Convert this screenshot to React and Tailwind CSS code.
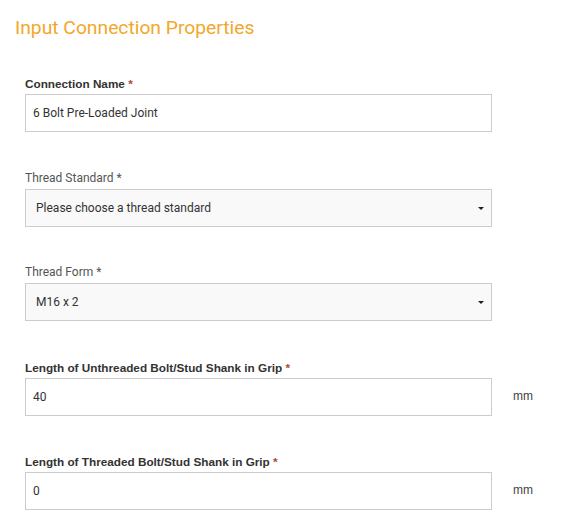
import { useState } from "react";

const font = { fontFamily: "Roboto, 'Liberation Sans', sans-serif" };
const arial = { fontFamily: "'Liberation Sans', Arial, sans-serif" };

function Caret() {
  return (
    <svg width="6" height="3" viewBox="0 0 6 3" className="shrink-0">
      <path d="M0 0 H6 L3 3 Z" fill="#222" />
    </svg>
  );
}

function Label({ text, bold }) {
  return (
    <div
      className={[
        "mb-[2px] leading-[17px]",
        bold ? "text-[11.75px] font-bold text-[#333]" : "text-[12px] text-[#555]",
      ].join(" ")}
      style={bold ? arial : undefined}
    >
      {text}{" "}
      <span className={bold ? "text-[#a94442]" : ""}>*</span>
    </div>
  );
}

function TextField({ label, value, unit, gap }) {
  const [val, setVal] = useState(value);
  return (
    <div className={gap}>
      <Label text={label} bold />
      <div className="flex items-center">
        <input
          value={val}
          onChange={(e) => setVal(e.target.value)}
          className="h-[38px] w-[467px] shrink-0 border border-[#cccccc] bg-white px-[7px] text-[12px] text-[#333] outline-none"
        />
        {unit && (
          <span className="ml-[21px] -mt-[2px] text-[12px] text-[#444]" style={arial}>
            {unit}
          </span>
        )}
      </div>
    </div>
  );
}

function SelectField({ label, value, gap }) {
  return (
    <div className={gap}>
      <Label text={label} />
      <div className="flex h-[38px] w-[467px] items-center justify-between border border-[#cccccc] bg-[#f9f9f9] pl-[10px] pr-[7px] text-[12px] text-[#333]">
        <span>{value}</span>
        <Caret />
      </div>
    </div>
  );
}

export default function App() {
  return (
    <div className="min-h-[528px] w-[562px] bg-white pl-[25px]" style={font}>
      <h1 className="-ml-[10px] pt-[16px] text-[19.25px] leading-[24px] font-normal text-[#f2a72b]">
        Input Connection Properties
      </h1>
      <div className="pt-[35px]">
        <TextField label="Connection Name" value="6 Bolt Pre-Loaded Joint" gap="mb-[38px]" />
        <SelectField label="Thread Standard" value="Please choose a thread standard" gap="mb-[37px]" />
        <SelectField label="Thread Form" value="M16 x 2" gap="mb-[38px]" />
        <TextField label="Length of Unthreaded Bolt/Stud Shank in Grip" value="40" unit="mm" gap="mb-[37px]" />
        <TextField label="Length of Threaded Bolt/Stud Shank in Grip" value="0" unit="mm" />
      </div>
    </div>
  );
}
